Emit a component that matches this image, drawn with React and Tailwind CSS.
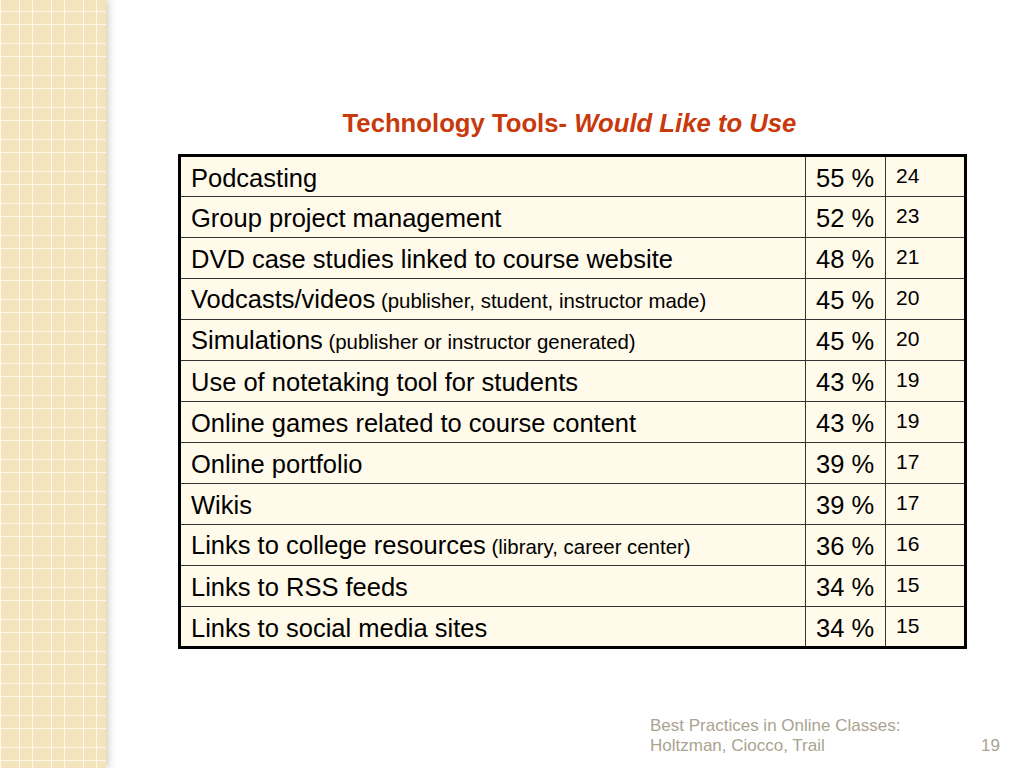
import React from 'react';

const rows = [
  { label: 'Podcasting', pct: '55 %', n: '24' },
  { label: 'Group project management', pct: '52 %', n: '23' },
  { label: 'DVD case studies linked to course website', pct: '48 %', n: '21' },
  { label: 'Vodcasts/videos', note: '(publisher, student, instructor made)', pct: '45 %', n: '20' },
  { label: 'Simulations', note: '(publisher or instructor generated)', pct: '45 %', n: '20' },
  { label: 'Use of notetaking tool for students', pct: '43 %', n: '19' },
  { label: 'Online games related to course content', pct: '43 %', n: '19' },
  { label: 'Online portfolio', pct: '39 %', n: '17' },
  { label: 'Wikis', pct: '39 %', n: '17' },
  { label: 'Links to college resources', note: '(library, career center)', pct: '36 %', n: '16' },
  { label: 'Links to RSS feeds', pct: '34 %', n: '15' },
  { label: 'Links to social media sites', pct: '34 %', n: '15' },
];

export default function App() {
  return (
    <div className="flex w-[1024px] h-[768px] bg-white overflow-hidden font-['Liberation_Sans',Arial,sans-serif]">
      {/* patterned side strip */}
      <div className="w-[106px] h-full shrink-0 bg-[#f4e4bd] bg-[repeating-linear-gradient(90deg,#fff8ea_0,#fff8ea_1px,transparent_1px,transparent_19px,#fff8ea_19px,#fff8ea_20px,transparent_20px,transparent_32px),repeating-linear-gradient(180deg,transparent_0,transparent_11px,#fff8ea_11px,#fff8ea_12px,transparent_12px,transparent_24px,#fff8ea_24px,#fff8ea_25px,transparent_25px,transparent_32px)] shadow-[3px_0_7px_rgba(120,100,60,0.3)]" />

      <div className="flex-1 relative">
        <div className="ml-[72px] mt-[108px] w-[789px]">
          <h1 className="text-center text-[25.7px] leading-[30px] font-bold text-[#c8390c] pr-[6px]">
            Technology Tools- <span className="italic">Would Like to Use</span>
          </h1>

          <table className="mt-[16px] w-[789px] border-collapse border-[3px] border-black bg-[#fffaea] text-black">
            <tbody>
              {rows.map((r) => (
                <tr key={r.label} className="h-[41px]">
                  <td className="border border-[#333] pl-[10px] text-[25.5px] leading-[30px] align-middle pt-[2px]">
                    {r.label}
                    {r.note && <span className="text-[20.4px]"> {r.note}</span>}
                  </td>
                  <td className="w-[80px] border border-[#333] pl-[10px] text-[25.5px] leading-[30px] align-middle pt-[2px]">
                    {r.pct}
                  </td>
                  <td className="w-[80px] border border-[#333] pl-[10px] text-[21px] leading-[24px] align-top pt-[7px]">
                    {r.n}
                  </td>
                </tr>
              ))}
            </tbody>
          </table>
        </div>

        <div className="absolute left-[544px] top-[716px] w-[350px] flex items-end justify-between text-[17px] leading-[20px] text-[#aaa390]">
          <div>
            <div>Best Practices in Online Classes:</div>
            <div>Holtzman, Ciocco, Trail</div>
          </div>
          <div>19</div>
        </div>
      </div>
    </div>
  );
}
